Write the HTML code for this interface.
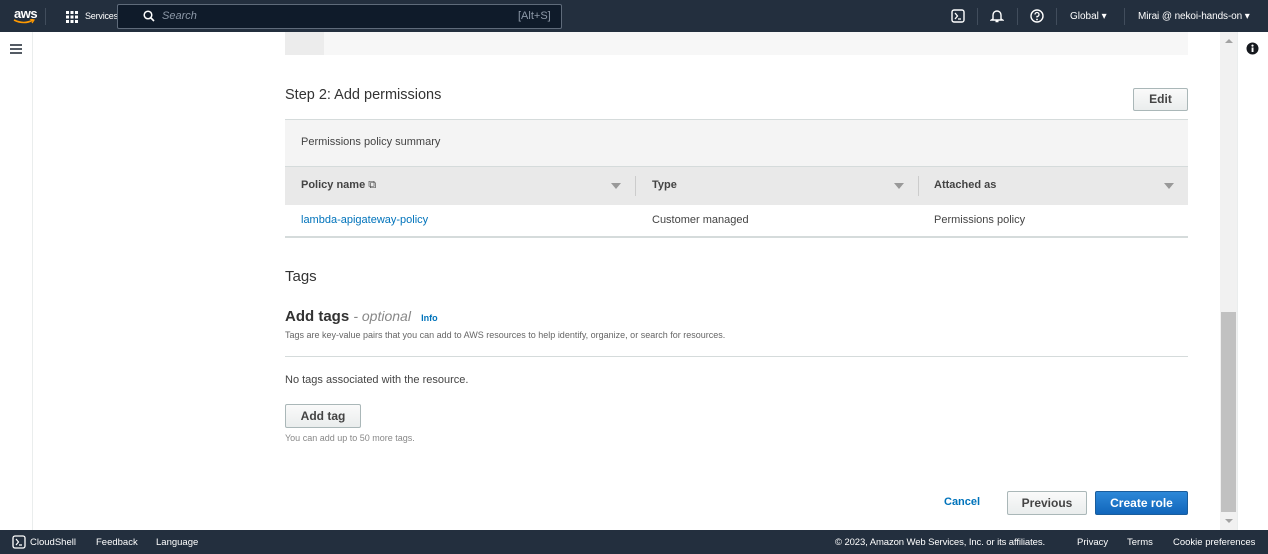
<!DOCTYPE html>
<html><head><style>
*{margin:0;padding:0;box-sizing:border-box}
body{width:1268px;height:554px;overflow:hidden;font-family:"Liberation Sans",Arial,sans-serif;background:#fff;position:relative;color:#16191f}
.a{position:absolute}
.nav{left:0;top:0;width:1268px;height:32px;background:#232f3e;color:#fff;font-size:11px}
.foot{left:0;top:530px;width:1268px;height:24px;background:#232f3e;color:#fff;font-size:9.5px}
.btn{border:1px solid #aab7b8;border-radius:2px;background:linear-gradient(#fafafa,#eaeded);font-weight:bold;font-size:12px;color:#444;text-align:center}
</style></head><body>
<div class="a nav">
 <div class="a" style="left:14px;top:6px;font-size:13px;font-weight:bold;letter-spacing:-0.5px">aws</div>
 <svg class="a" style="left:13px;top:19px" width="22" height="6"><path d="M1 1 Q11 6 20 1" stroke="#f90" stroke-width="1.6" fill="none"/><path d="M17 0 L21 1 L19 4" stroke="#f90" stroke-width="1.2" fill="none"/></svg>
 <div class="a" style="left:45px;top:8px;width:1px;height:17px;background:#414d5c"></div>
 <svg class="a" style="left:66px;top:11px" width="12" height="12" fill="#fff"><rect x="0" y="0" width="3" height="3"/><rect x="4.5" y="0" width="3" height="3"/><rect x="9" y="0" width="3" height="3"/><rect x="0" y="4.5" width="3" height="3"/><rect x="4.5" y="4.5" width="3" height="3"/><rect x="9" y="4.5" width="3" height="3"/><rect x="0" y="9" width="3" height="3"/><rect x="4.5" y="9" width="3" height="3"/><rect x="9" y="9" width="3" height="3"/></svg>
 <div class="a" style="left:85px;top:11px;font-size:9px;letter-spacing:-0.2px">Services</div>
 <div class="a" style="left:117px;top:4px;width:445px;height:25px;background:#0f1b2a;border:1px solid #5f6b7a;border-radius:2px"></div>
 <svg class="a" style="left:143px;top:10px" width="12" height="12"><circle cx="5" cy="5" r="3.8" stroke="#fff" stroke-width="1.5" fill="none"/><path d="M8 8 L11 11" stroke="#fff" stroke-width="1.6"/></svg>
 <div class="a" style="left:162px;top:10px;font-style:italic;color:#8d99a8;font-size:11px">Search</div>
 <div class="a" style="left:518px;top:10px;color:#8d99a8;font-size:11px">[Alt+S]</div>
 <svg class="a" style="left:951px;top:9px" width="14" height="14"><rect x="1" y="1" width="12" height="12" rx="2" stroke="#fff" stroke-width="1.4" fill="none"/><path d="M4 4 L6.5 7 L4 10 M7 10 H10" stroke="#fff" stroke-width="1.3" fill="none"/></svg>
 <div class="a" style="left:977px;top:8px;width:1px;height:17px;background:#414d5c"></div>
 <svg class="a" style="left:990px;top:9px" width="14" height="14"><path d="M3 10 V6 A4 4 0 0 1 11 6 V10 L12.5 11 H1.5 Z M5.5 12.5 H8.5" stroke="#fff" stroke-width="1.4" fill="none"/></svg>
 <div class="a" style="left:1017px;top:8px;width:1px;height:17px;background:#414d5c"></div>
 <svg class="a" style="left:1030px;top:9px" width="14" height="14"><circle cx="7" cy="7" r="6" stroke="#fff" stroke-width="1.4" fill="none"/><path d="M5 5.5 A2 2 0 1 1 7 7.5 V8.5" stroke="#fff" stroke-width="1.3" fill="none"/><circle cx="7" cy="10.5" r=".9" fill="#fff"/></svg>
 <div class="a" style="left:1056px;top:8px;width:1px;height:17px;background:#414d5c"></div>
 <div class="a" style="left:1070px;top:11px;font-size:10px">Global ▾</div>
 <div class="a" style="left:1124px;top:8px;width:1px;height:17px;background:#414d5c"></div>
 <div class="a" style="left:1138px;top:11px;font-size:10px;letter-spacing:-0.1px">Mirai @ nekoi-hands-on ▾</div>
</div>
<div class="a" style="left:32px;top:32px;width:1px;height:498px;background:#eaeded"></div>
<div class="a" style="left:10px;top:44px;width:12px;height:2px;background:#545b64;box-shadow:0 4px 0 #545b64,0 8px 0 #545b64"></div>
<div class="a" style="left:1220px;top:32px;width:17px;height:498px;background:#f1f1f1"></div>
<div class="a" style="left:1221px;top:312px;width:15px;height:200px;background:#c1c1c1"></div>
<div class="a" style="left:1225px;top:39px;border:4px solid transparent;border-bottom:4px solid #a3a3a3;border-top:0"></div>
<div class="a" style="left:1225px;top:519px;border:4px solid transparent;border-top:4px solid #a3a3a3;border-bottom:0"></div>
<div class="a" style="left:1237px;top:32px;width:1px;height:498px;background:#eaeded"></div>
<svg class="a" style="left:1246px;top:42px" width="13" height="13"><circle cx="6.5" cy="6.5" r="6" fill="#16191f"/><rect x="5.6" y="5.5" width="1.9" height="4.5" fill="#fff"/><circle cx="6.5" cy="3.6" r="1.1" fill="#fff"/></svg>
<div class="a" style="left:285px;top:32px;width:903px;height:23px;background:#f7f7f7"></div>
<div class="a" style="left:285px;top:32px;width:39px;height:23px;background:#ececec"></div>
<div class="a" style="left:285px;top:87px;font-size:14.5px;color:#333">Step 2: Add permissions</div>
<div class="a btn" style="left:1133px;top:88px;width:55px;height:23px;line-height:21px">Edit</div>
<div class="a" style="left:285px;top:119px;width:903px;height:1px;background:#d5dbdb"></div>
<div class="a" style="left:285px;top:120px;width:903px;height:46px;background:#f4f4f4"></div>
<div class="a" style="left:301px;top:136px;font-size:11px;color:#444">Permissions policy summary</div>
<div class="a" style="left:285px;top:166px;width:903px;height:1px;background:#d5dbdb"></div>
<div class="a" style="left:285px;top:167px;width:903px;height:38px;background:#e9e9e9"></div>
<div class="a" style="left:301px;top:179px;font-size:11px;font-weight:bold;color:#444">Policy name <span style="font-weight:normal">⧉</span></div>
<div class="a" style="left:611px;top:183px;border:5px solid transparent;border-top:6px solid #999;border-bottom:0"></div>
<div class="a" style="left:635px;top:176px;width:1px;height:20px;background:#ccc"></div>
<div class="a" style="left:652px;top:179px;font-size:11px;font-weight:bold;color:#444">Type</div>
<div class="a" style="left:894px;top:183px;border:5px solid transparent;border-top:6px solid #999;border-bottom:0"></div>
<div class="a" style="left:918px;top:176px;width:1px;height:20px;background:#ccc"></div>
<div class="a" style="left:934px;top:179px;font-size:11px;font-weight:bold;color:#444">Attached as</div>
<div class="a" style="left:1164px;top:183px;border:5px solid transparent;border-top:6px solid #999;border-bottom:0"></div>
<div class="a" style="left:301px;top:214px;font-size:11px;color:#0073bb">lambda-apigateway-policy</div>
<div class="a" style="left:652px;top:214px;font-size:11px;color:#444">Customer managed</div>
<div class="a" style="left:934px;top:214px;font-size:11px;color:#444">Permissions policy</div>
<div class="a" style="left:285px;top:236px;width:903px;height:2px;background:#d5dbdb"></div>
<div class="a" style="left:285px;top:268px;font-size:15px;color:#333">Tags</div>
<div class="a" style="left:285px;top:308px;font-size:15px;font-weight:bold;color:#333">Add tags <span style="font-weight:normal;font-style:italic;color:#888;font-size:14px">- optional</span> <span style="font-size:9px;color:#0073bb;margin-left:6px">Info</span></div>
<div class="a" style="left:285px;top:330px;font-size:9px;color:#666">Tags are key-value pairs that you can add to AWS resources to help identify, organize, or search for resources.</div>
<div class="a" style="left:285px;top:356px;width:903px;height:1px;background:#d5dbdb"></div>
<div class="a" style="left:285px;top:374px;font-size:11px;color:#444">No tags associated with the resource.</div>
<div class="a btn" style="left:285px;top:404px;width:76px;height:24px;line-height:22px">Add tag</div>
<div class="a" style="left:285px;top:433px;font-size:9px;color:#888">You can add up to 50 more tags.</div>
<div class="a" style="left:944px;top:496px;font-size:11px;font-weight:bold;color:#0073bb">Cancel</div>
<div class="a btn" style="left:1007px;top:491px;width:80px;height:24px;line-height:22px">Previous</div>
<div class="a" style="left:1095px;top:491px;width:93px;height:24px;line-height:22px;background:linear-gradient(#2d88d8,#1166bb);border:1px solid #1a5d9c;border-radius:2px;color:#fff;font-weight:bold;font-size:12px;text-align:center">Create role</div>
<div class="a foot">
 <svg class="a" style="left:12px;top:5px" width="14" height="14"><rect x="1" y="1" width="12" height="12" rx="2" stroke="#fff" stroke-width="1.3" fill="none"/><path d="M4 4 L6.5 7 L4 10 M7 10 H10" stroke="#fff" stroke-width="1.2" fill="none"/></svg>
 <div class="a" style="left:30px;top:7px">CloudShell</div>
 <div class="a" style="left:96px;top:7px">Feedback</div>
 <div class="a" style="left:156px;top:7px">Language</div>
 <div class="a" style="left:835px;top:7px;letter-spacing:-0.1px">© 2023, Amazon Web Services, Inc. or its affiliates.</div>
 <div class="a" style="left:1077px;top:7px">Privacy</div>
 <div class="a" style="left:1127px;top:7px">Terms</div>
 <div class="a" style="left:1173px;top:7px">Cookie preferences</div>
</div>
</body></html>
